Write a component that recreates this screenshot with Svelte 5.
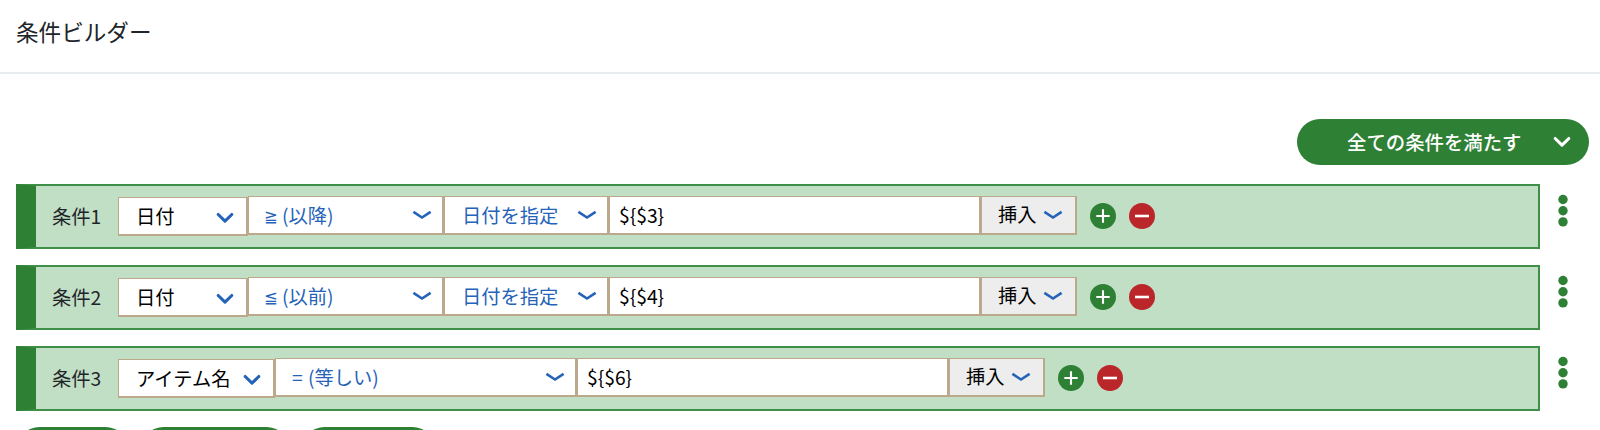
<script>
  const rows = [
    { n: 1, field: '日付', fw: 130, sign: '≧', op: '(以降)', ow: 196, kind: '日付を指定', value: '${$3}' },
    { n: 2, field: '日付', fw: 130, sign: '≦', op: '(以前)', ow: 196, kind: '日付を指定', value: '${$4}' },
    { n: 3, field: 'アイテム名', fw: 157, sign: '=', op: '(等しい)', ow: 302, kind: '', value: '${$6}' }
  ];
  const buttons = [111, 148, 133];
</script>

{#snippet bold()}
  <svg class="bold" width="18" height="12" viewBox="0 0 18 12"><path d="M2.200 2.500 9 9.200l6.800-6.700" /></svg>
{/snippet}
{#snippet thin()}
  <svg class="thin" width="20" height="10" viewBox="0 0 20 10"><path d="M1.400 1.900 10 7.500l8.600-5.600" /></svg>
{/snippet}

<div class="page">
  <header><h1>条件ビルダー</h1></header>
  <div class="top">
    <button class="match"><span>全ての条件を満たす</span>{@render bold()}</button>
  </div>
  <div class="rows">
    {#each rows as r}
      <div class="line">
        <div class="row">
          <span class="name">条件{r.n}</span>
          <div class="field" style="width:{r.fw}px"><span>{r.field}</span>{@render bold()}</div>
          <div class="box op" style="width:{r.ow}px"><span><i class:eq={r.sign === '='}>{r.sign}</i>{r.op}</span>{@render thin()}</div>
          {#if r.kind}
            <div class="box kind"><span>{r.kind}</span>{@render thin()}</div>
          {/if}
          <div class="box input">{r.value}</div>
          <div class="box insert"><span>挿入</span>{@render thin()}</div>
          <svg class="circle" width="26" height="26" viewBox="0 0 26 26"><circle cx="13" cy="13" r="13" fill="#2e8035" /><path d="M6.300 13h13.400M13 6.300v13.400" /></svg>
          <svg class="circle minus" width="26" height="26" viewBox="0 0 26 26"><circle cx="13" cy="13" r="13" fill="#ba2629" /><path d="M6 13h14" /></svg>
        </div>
        <svg class="dots" width="10" height="34" viewBox="0 0 10 34"><circle cx="5" cy="5.500" r="4.700" /><circle cx="5" cy="16.700" r="4.700" /><circle cx="5" cy="27.900" r="4.700" /></svg>
      </div>
    {/each}
  </div>
  <div class="buttons">
    {#each buttons as w}<span style="width:{w}px"></span>{/each}
  </div>
</div>

<style>
  .page {
    height: 430px;
    overflow: hidden;
    background: #fff;
    color: #212529;
    font: 19.3px/28px "Noto Sans CJK JP", sans-serif;
  }
  header {
    height: 72px;
    box-sizing: content-box;
    border-bottom: 2px solid #e9ecef;
  }
  h1 {
    margin: 0;
    padding: 15px 16px 0;
    font-size: 22.6px;
    line-height: 34px;
    font-weight: 400;
  }
  .top {
    display: flex;
    justify-content: flex-end;
    padding: 45px 11px 0 0;
  }
  .match {
    display: flex;
    align-items: center;
    justify-content: space-between;
    box-sizing: border-box;
    width: 292px;
    height: 46px;
    padding: 0 18px 0 50px;
    border: 0;
    border-radius: 23px;
    background: #2e8035;
    color: #fff;
    font: 500 19.4px/28px "Noto Sans CJK JP", sans-serif;
  }
  svg { flex: none; fill: none; stroke-linecap: round; stroke-linejoin: round; }
  .bold { stroke: #2563b8; stroke-width: 3.1; }
  .match .bold { stroke: #fff; }
  .thin { stroke: #2563b8; stroke-width: 2.6; stroke-linecap: butt; stroke-linejoin: miter; }
  .rows {
    display: grid;
    gap: 16px;
    padding: 19px 0 0 16px;
  }
  .line { display: flex; }
  .row {
    display: flex;
    align-items: flex-start;
    box-sizing: border-box;
    width: 1524px;
    height: 65px;
    padding-top: 10px;
    border: 2px solid #3f8f49;
    border-left: 20px solid #2e8035;
    background: #c1dfc5;
  }
  .name { width: 66px; padding: 6px 0 0 16px; }
  .field, .box {
    display: flex;
    align-items: center;
    justify-content: space-between;
    box-sizing: border-box;
    height: 39px;
    border: 1px solid #bca88b;
    border-width: 1px 2px 2px 1px;
    background: #fff;
    color: #000;
    white-space: nowrap;
  }
  .field { margin-top: 1px; padding: 0 12px 1px 17px; }
  .field .bold { margin-top: 5px; }
  .op, .kind { padding: 0 10px 0 17px; color: #2563b8; }
  .op { padding-left: 15px; }
  .kind { width: 165px; }
  i {
    display: inline-block;
    width: 18px;
    font-style: normal;
    font-family: "DejaVu Sans", sans-serif;
    font-size: 16.500px;
    line-height: 20px;
    vertical-align: 1px;
  }
  .eq { width: 16px; padding-left: 1px; font-family: inherit; font-size: inherit; line-height: inherit; vertical-align: baseline; }
  .input { width: 372px; padding-left: 9px; }
  .insert { width: 96px; padding: 0 12px 1px 16px; background: #ededed; }
  .insert span { margin-top: -1px; }
  .circle { margin: 7px 0 0 13px; stroke: #fff; stroke-width: 2.1; stroke-linecap: butt; }
  .minus { stroke-width: 2.6; }
  .circle circle { stroke: none; }
  .dots { margin: 10px 0 0 17.600px; fill: #2e8035; }
  .buttons { display: flex; gap: 13px; padding: 16px 0 0 17px; }
  .buttons span { flex: none; height: 45px; border-radius: 23px; background: #2e8035; }
</style>
